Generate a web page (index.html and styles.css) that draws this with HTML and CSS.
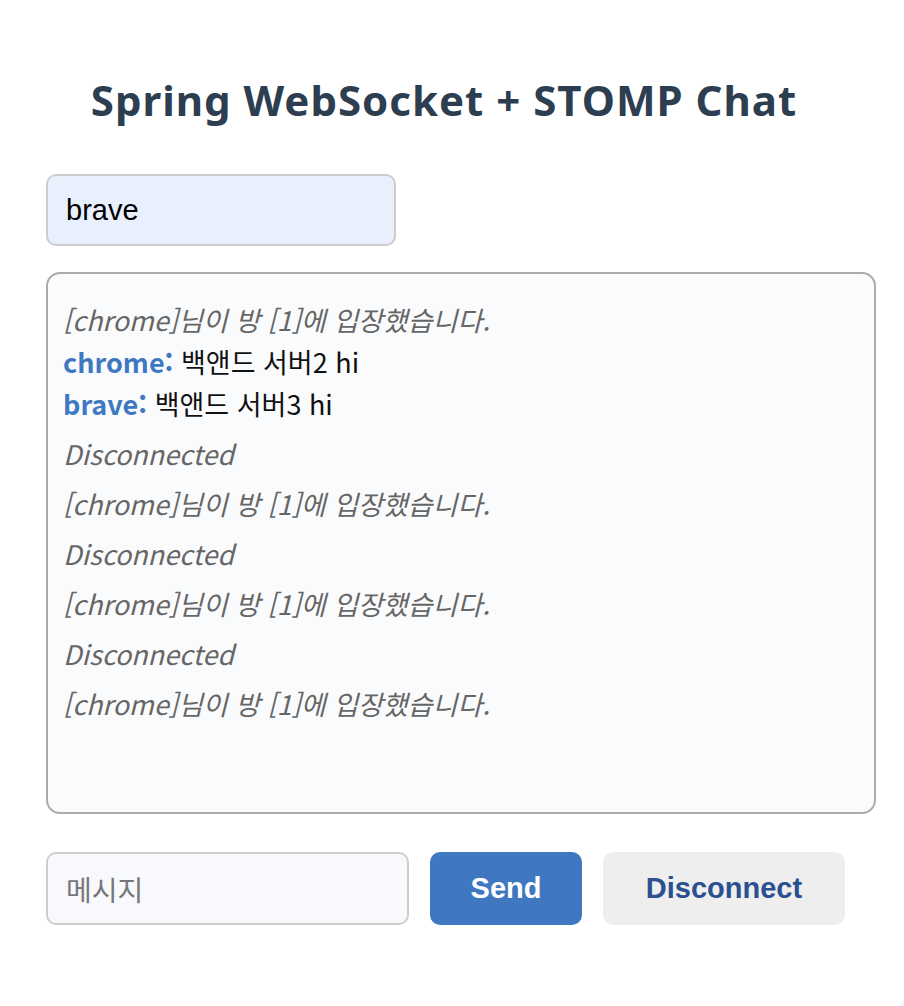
FILE: index.html
```html
<!DOCTYPE html>
<html lang="ko">
<head>
<meta charset="utf-8">
<title>Spring WebSocket + STOMP Chat</title>
<link rel="stylesheet" href="styles.css">
</head>
<body>
<div class="card">
  <h1 class="title">Spring WebSocket + STOMP Chat</h1>
  <div class="chat">
    <input class="name-input" type="text" value="brave">
    <div class="log">
      <div class="line sys">[chrome]님이 방 [1]에 입장했습니다.</div>
      <div class="line msg"><span class="who">chrome:</span> 백앤드 서버2 hi</div>
      <div class="line msg"><span class="who">brave:</span> 백앤드 서버3 hi</div>
      <div class="line sys">Disconnected</div>
      <div class="line sys">[chrome]님이 방 [1]에 입장했습니다.</div>
      <div class="line sys">Disconnected</div>
      <div class="line sys">[chrome]님이 방 [1]에 입장했습니다.</div>
      <div class="line sys">Disconnected</div>
      <div class="line sys">[chrome]님이 방 [1]에 입장했습니다.</div>
    </div>
    <div class="composer">
      <input class="msg-input" type="text" placeholder="메시지">
      <button class="btn btn-send">Send</button>
      <button class="btn btn-disc">Disconnect</button>
    </div>
  </div>
</div>
</body>
</html>
```
FILE: styles.css
```css
html { overflow: hidden; }
* { box-sizing: border-box; }
body {
  margin: 0;
  background: #f4f4f5;
  font-family: "Noto Sans CJK KR", "Noto Sans", sans-serif;
}
.card {
  margin: -20px -4px 0 -20px;
  height: 1032px;
  background: #ffffff;
  border-radius: 26px;
  padding-top: 96px;
}
.title {
  margin: 0;
  text-align: center;
  font-family: "Noto Sans", "Noto Sans CJK KR", sans-serif;
  font-weight: 700;
  font-size: 42px;
  letter-spacing: 1px;
  line-height: 48px;
  color: #2c3e50;
}
.chat {
  margin: 50px 0 0 66px;
  width: 830px;
  display: flex;
  flex-direction: column;
  align-items: flex-start;
}
.name-input {
  width: 350px;
  height: 72px;
  border: 2px solid #cdcdcd;
  border-radius: 10px;
  background: #e8f0fe;
  padding: 0 18px;
  font-family: "Liberation Sans", Arial, sans-serif;
  font-size: 29px;
  color: #000;
  outline: none;
}
.log {
  margin-top: 26px;
  width: 830px;
  height: 542px;
  border: 2px solid #ababab;
  border-radius: 14px;
  background: #fafbfd;
  padding: 17px 15px;
}
.line {
  font-size: 27px;
  line-height: 42px;
  white-space: nowrap;
}
.sys {
  margin-top: 8px;
  font-style: italic;
  color: #666;
}
.msg { color: #111; }
.who {
  color: #3f78c1;
  font-weight: 700;
}
.composer {
  margin-top: 38px;
  display: flex;
  gap: 21px;
  align-items: stretch;
}
.msg-input {
  width: 363px;
  height: 73px;
  border: 2px solid #cdcdcd;
  border-radius: 10px;
  background: #f8f9fc;
  padding: 0 18px;
  font-family: "Noto Sans CJK KR", sans-serif;
  font-size: 28px;
  outline: none;
}
.msg-input::placeholder { color: #777; }
.btn {
  border: none;
  border-radius: 10px;
  font-family: "Liberation Sans", Arial, sans-serif;
  font-weight: 700;
  font-size: 29px;
  height: 73px;
  cursor: pointer;
}
.btn-send {
  width: 152px;
  background: #3f78c1;
  color: #fff;
}
.btn-disc {
  width: 242px;
  background: #eeeeee;
  color: #2a5091;
}
```
